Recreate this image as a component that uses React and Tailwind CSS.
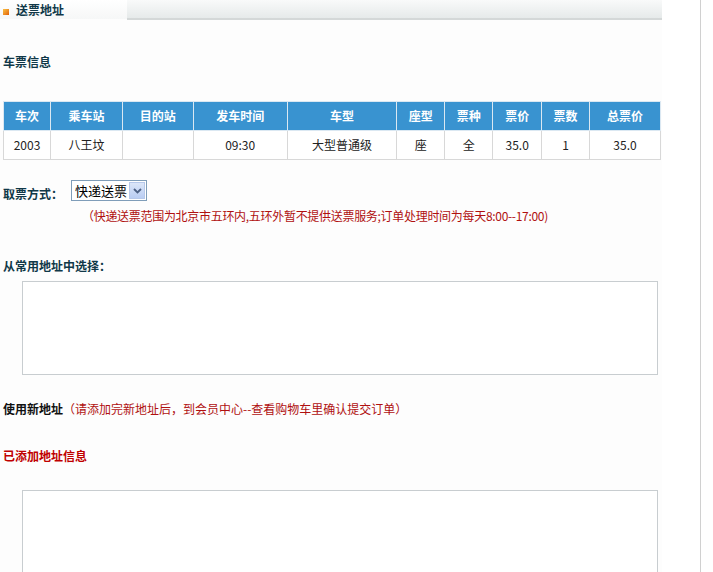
export default function App() {
  const heads = [
    ["车次", 47],
    ["乘车站", 72],
    ["目的站", 71],
    ["发车时间", 94],
    ["车型", 110],
    ["座型", 48],
    ["票种", 48],
    ["票价", 49],
    ["票数", 48],
    ["总票价", 71],
  ];
  const row = ["2003", "八王坟", "", "09:30", "大型普通级", "座", "全", "35.0", "1", "35.0"];
  return (
    <div className="relative w-[713px] h-[572px] overflow-hidden bg-white text-[12px] font-['Noto_Sans_CJK_SC',sans-serif]">
      <div className="absolute left-[700px] top-0 h-full w-px bg-[#d0d0d0]" />
      <div className="w-[662px] h-full bg-[#fdfdfd]">
        {/* header */}
        <div className="flex h-[20px]">
          <div className="w-[127px] h-[19px] flex items-center bg-gradient-to-b from-white to-[#f6f7f7]">
            <span className="ml-[3px] mt-[4px] w-[6px] h-[6px] bg-gradient-to-br from-[#f8c040] to-[#e06000]" />
            <span className="ml-[7px] font-bold text-[#103848] leading-none mt-[1px]">送票地址</span>
          </div>
          <div className="flex-1 h-[20px] bg-gradient-to-b from-[#f9fafa] to-[#e6eaea] border-b-2 border-[#d4d8d8]" />
        </div>
        <div className="pl-[3px] pt-[35px] font-bold text-[#103848] leading-[14px]">车票信息</div>
        {/* table */}
        <table className="ml-[3px] mt-[32px] w-[658px] border-collapse text-center">
          <thead>
            <tr className="h-[29px] bg-[#3993d0] text-white font-bold">
              {heads.map(([h, w], i) => (
                <th key={i} style={{ width: w }} className="border border-[#dbe8f2] font-bold p-0">
                  {h}
                </th>
              ))}
            </tr>
          </thead>
          <tbody>
            <tr className="h-[29px] text-[#222] bg-white">
              {row.map((c, i) => (
                <td key={i} className="border border-[#d8d8d8] p-0">
                  {c}
                </td>
              ))}
            </tr>
          </tbody>
        </table>
        {/* pick method */}
        <div className="flex items-center pl-[3px] mt-[20px] h-[21px]">
          <span className="font-bold text-[#103848] mt-[6px]">取票方式：</span>
          <div className="ml-[8px] flex items-center h-[21px] w-[76px] border border-[#7f9db9] bg-white">
            <span className="pl-[3px] flex-1 text-[13px] text-black leading-none">快递送票</span>
            <span className="w-[16px] h-[17px] mr-[1px] flex items-center justify-center bg-gradient-to-b from-[#dce6f8] to-[#b9cdf3] border border-[#b6c8ea]">
              <svg width="9" height="6" viewBox="0 0 9 6">
                <path d="M1 1 L4.5 4.5 L8 1" stroke="#4d6185" strokeWidth="1.8" fill="none" />
              </svg>
            </span>
          </div>
        </div>
        <div className="pl-[82px] mt-[8px] text-[#b01010] leading-[14px] tracking-[-0.3px]">
          （快递送票范围为北京市五环内,五环外暂不提供送票服务;订单处理时间为每天8:00--17:00)
        </div>
        <div className="pl-[3px] mt-[36px] font-bold text-[#103848] leading-[14px]">从常用地址中选择：</div>
        <div className="ml-[22px] mt-[8px] w-[636px] h-[94px] border border-[#c8cdd0] bg-white" />
        <div className="pl-[3px] mt-[27px] leading-[14px]">
          <span className="font-bold text-[#111]">使用新地址</span>
          <span className="text-[#b01010]">（请添加完新地址后，到会员中心--查看购物车里确认提交订单）</span>
        </div>
        <div className="pl-[3px] mt-[33px] font-bold text-[#c00000] leading-[14px]">已添加地址信息</div>
        <div className="ml-[22px] mt-[27px] w-[636px] h-[120px] border border-[#c8cdd0] bg-white" />
      </div>
    </div>
  );
}
